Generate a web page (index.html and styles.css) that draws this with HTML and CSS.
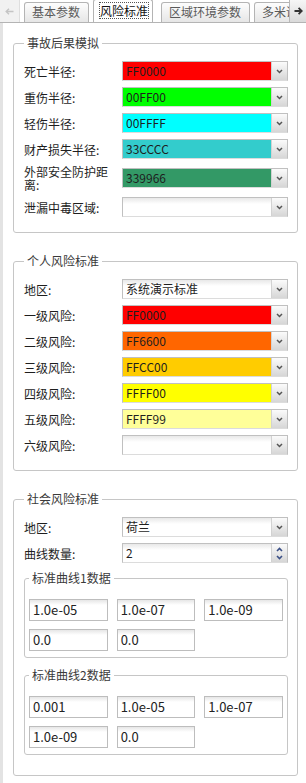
FILE: index.html
```html
<!DOCTYPE html>
<html>
<head>
    <meta charset="utf-8">
    <title>风险标准</title>
    <link rel="stylesheet" href="styles.css">
</head>
<body>
    <div class="tabbar">
        <div class="nav nav-left">
            <svg width="9" height="7" viewBox="0 0 9 7"><path d="M8.5 3.5H1.5M4 0.8L1.2 3.5L4 6.2" fill="none" stroke="#c4c4c4" stroke-width="1.4"/></svg>
        </div>
        <div class="tabs">
            <div class="tab">基本参数</div>
            <div class="tab active"><span>风险标准</span></div>
            <div class="tab">区域环境参数</div>
            <div class="tab">多米诺效应</div>
        </div>
        <div class="nav nav-right">
            <svg width="9" height="8" viewBox="0 0 9 8"><path d="M0.5 4H7.5M4.6 0.8L7.8 4L4.6 7.2" fill="none" stroke="#333" stroke-width="1.8"/></svg>
        </div>
    </div>

    <div class="panel">
        <fieldset class="group">
            <legend>事故后果模拟</legend>
            <div class="form">
                <label>死亡半径:</label>
                <div class="combo"><span class="value" style="background:#ff0000">FF0000</span><span class="btn"><svg width="7" height="5" viewBox="0 0 7 5"><path d="M1 1l2.5 2.5L6 1" fill="none" stroke="#555" stroke-width="1.5"/></svg></span></div>
                <label>重伤半径:</label>
                <div class="combo"><span class="value" style="background:#00ff00">00FF00</span><span class="btn"><svg width="7" height="5" viewBox="0 0 7 5"><path d="M1 1l2.5 2.5L6 1" fill="none" stroke="#555" stroke-width="1.5"/></svg></span></div>
                <label>轻伤半径:</label>
                <div class="combo"><span class="value" style="background:#00ffff">00FFFF</span><span class="btn"><svg width="7" height="5" viewBox="0 0 7 5"><path d="M1 1l2.5 2.5L6 1" fill="none" stroke="#555" stroke-width="1.5"/></svg></span></div>
                <label>财产损失半径:</label>
                <div class="combo"><span class="value" style="background:#33cccc">33CCCC</span><span class="btn"><svg width="7" height="5" viewBox="0 0 7 5"><path d="M1 1l2.5 2.5L6 1" fill="none" stroke="#555" stroke-width="1.5"/></svg></span></div>
                <label>外部安全防护距离:</label>
                <div class="combo"><span class="value" style="background:#339966">339966</span><span class="btn"><svg width="7" height="5" viewBox="0 0 7 5"><path d="M1 1l2.5 2.5L6 1" fill="none" stroke="#555" stroke-width="1.5"/></svg></span></div>
                <label>泄漏中毒区域:</label>
                <div class="combo"><span class="value empty"></span><span class="btn"><svg width="7" height="5" viewBox="0 0 7 5"><path d="M1 1l2.5 2.5L6 1" fill="none" stroke="#555" stroke-width="1.5"/></svg></span></div>
            </div>
        </fieldset>

        <fieldset class="group">
            <legend>个人风险标准</legend>
            <div class="form">
                <label>地区:</label>
                <div class="combo"><span class="value empty">系统演示标准</span><span class="btn"><svg width="7" height="5" viewBox="0 0 7 5"><path d="M1 1l2.5 2.5L6 1" fill="none" stroke="#555" stroke-width="1.5"/></svg></span></div>
                <label>一级风险:</label>
                <div class="combo"><span class="value" style="background:#ff0000">FF0000</span><span class="btn"><svg width="7" height="5" viewBox="0 0 7 5"><path d="M1 1l2.5 2.5L6 1" fill="none" stroke="#555" stroke-width="1.5"/></svg></span></div>
                <label>二级风险:</label>
                <div class="combo"><span class="value" style="background:#ff6600">FF6600</span><span class="btn"><svg width="7" height="5" viewBox="0 0 7 5"><path d="M1 1l2.5 2.5L6 1" fill="none" stroke="#555" stroke-width="1.5"/></svg></span></div>
                <label>三级风险:</label>
                <div class="combo"><span class="value" style="background:#ffcc00">FFCC00</span><span class="btn"><svg width="7" height="5" viewBox="0 0 7 5"><path d="M1 1l2.5 2.5L6 1" fill="none" stroke="#555" stroke-width="1.5"/></svg></span></div>
                <label>四级风险:</label>
                <div class="combo"><span class="value" style="background:#ffff00">FFFF00</span><span class="btn"><svg width="7" height="5" viewBox="0 0 7 5"><path d="M1 1l2.5 2.5L6 1" fill="none" stroke="#555" stroke-width="1.5"/></svg></span></div>
                <label>五级风险:</label>
                <div class="combo"><span class="value" style="background:#ffff99">FFFF99</span><span class="btn"><svg width="7" height="5" viewBox="0 0 7 5"><path d="M1 1l2.5 2.5L6 1" fill="none" stroke="#555" stroke-width="1.5"/></svg></span></div>
                <label>六级风险:</label>
                <div class="combo"><span class="value empty"></span><span class="btn"><svg width="7" height="5" viewBox="0 0 7 5"><path d="M1 1l2.5 2.5L6 1" fill="none" stroke="#555" stroke-width="1.5"/></svg></span></div>
            </div>
        </fieldset>

        <fieldset class="group group-social">
            <legend>社会风险标准</legend>
            <div class="form">
                <label>地区:</label>
                <div class="combo"><span class="value empty">荷兰</span><span class="btn"><svg width="7" height="5" viewBox="0 0 7 5"><path d="M1 1l2.5 2.5L6 1" fill="none" stroke="#555" stroke-width="1.5"/></svg></span></div>
                <label>曲线数量:</label>
                <div class="combo"><span class="value empty">2</span><span class="spin">
                    <svg width="7" height="5" viewBox="0 0 7 5"><path d="M1 4l2.5 -2.5L6 4" fill="none" stroke="#3a4f86" stroke-width="1.6"/></svg>
                    <svg width="7" height="5" viewBox="0 0 7 5"><path d="M1 1l2.5 2.5L6 1" fill="none" stroke="#3a4f86" stroke-width="1.6"/></svg>
                </span></div>
            </div>

            <fieldset class="subgroup">
                <legend>标准曲线1数据</legend>
                <div class="fields">
                    <div class="field">1.0e-05</div>
                    <div class="field">1.0e-07</div>
                    <div class="field">1.0e-09</div>
                    <div class="field">0.0</div>
                    <div class="field">0.0</div>
                </div>
            </fieldset>

            <fieldset class="subgroup">
                <legend>标准曲线2数据</legend>
                <div class="fields">
                    <div class="field">0.001</div>
                    <div class="field">1.0e-05</div>
                    <div class="field">1.0e-07</div>
                    <div class="field">1.0e-09</div>
                    <div class="field">0.0</div>
                </div>
            </fieldset>
        </fieldset>
    </div>
</body>
</html>
```

FILE: styles.css
```css
body {
    margin: 0;
    width: 306px;
    height: 783px;
    overflow: hidden;
    background: #fff;
    font-family: "Noto Sans CJK SC", "Noto Sans", sans-serif;
    font-size: 12px;
    color: #1e1e1e;
}
.tabbar {
    display: flex;
    height: 23px;
    box-sizing: border-box;
    border-bottom: 1px solid #b4b4b4;
}
.nav {
    flex: none;
    display: flex;
    align-items: center;
    justify-content: center;
    height: 22px;
}
.nav-left {
    width: 20px;
    background: #f1f1f1;
    border-right: 1px solid #dedede;
    box-sizing: border-box;
}
.nav-right {
    width: 16px;
    background: linear-gradient(#f6f6f6, #dadada);
    border-left: 1px solid #b8b8b8;
}
.tabs {
    flex: 1;
    display: flex;
    align-items: flex-end;
    padding-left: 4px;
    overflow: hidden;
}
.tab {
    flex: none;
    height: 19px;
    line-height: 18px;
    padding: 0 8px 0 7px;
    margin-right: 4px;
    border: 1px solid #b4b4b4;
    border-bottom: none;
    border-radius: 3px 3px 0 0;
    background: linear-gradient(#fdfdfd, #e6e6e6);
    color: #5a5a5a;
}
.tab.active {
    height: 23px;
    margin-bottom: -1px;
    line-height: 22px;
    padding: 0 3px 0 5px;
    margin-right: 8px;
    background: #fff;
    color: #111;
}
.tab.active span {
    padding: 0 1px;
    outline: 1px dotted #555;
    outline-offset: -1px;
}
.panel {
    height: 760px;
    border-left: 3px solid #e3e3e3;
    padding: 12px 8px 0 10px;
}
.group {
    margin: 0 0 20px;
    padding: 10px 9px 15px 10px;
    min-width: 0;
    border: 1px solid #c6c6c6;
    border-radius: 3px;
}
.group legend,
.subgroup legend {
    padding: 0 3px;
    line-height: 16px;
    color: #3a3a3a;
}
.group-social {
    padding-bottom: 20px;
}
.form {
    display: grid;
    grid-template-columns: 90px 1fr;
    column-gap: 8px;
    row-gap: 6px;
    align-items: center;
}
.form label {
    line-height: 13px;
}
.combo {
    display: flex;
    height: 20px;
    box-sizing: border-box;
    border: 1px solid #c0c0c0;
    border-bottom-color: #dcdcdc;
}
.combo .value {
    flex: 1;
    padding-left: 3px;
    line-height: 18px;
}
.combo .value.empty {
    background: linear-gradient(#e8e8e8, #fff 6px);
}
.combo .btn,
.combo .spin {
    flex: none;
    width: 15px;
    display: flex;
    align-items: center;
    justify-content: center;
    border-left: 1px solid #d2d2d2;
    background: linear-gradient(#fbfbfb, #d6d6d6);
}
.combo .spin {
    flex-direction: column;
    gap: 3px;
}
.subgroup {
    margin: 7px 0 0;
    padding: 13px 4px 6px 4px;
    min-width: 0;
    border: 1px solid #c6c6c6;
    border-radius: 3px;
}
.subgroup + .subgroup {
    margin-top: 9px;
}
.fields {
    display: grid;
    grid-template-columns: repeat(3, 1fr);
    column-gap: 9px;
    row-gap: 8px;
}
.field {
    height: 22px;
    box-sizing: border-box;
    border: 1px solid #bdbdbd;
    padding-left: 3px;
    background: linear-gradient(#e6e6e6, #fff 5px);
    font-size: 13px;
    line-height: 20px;
    color: #222;
}
```
